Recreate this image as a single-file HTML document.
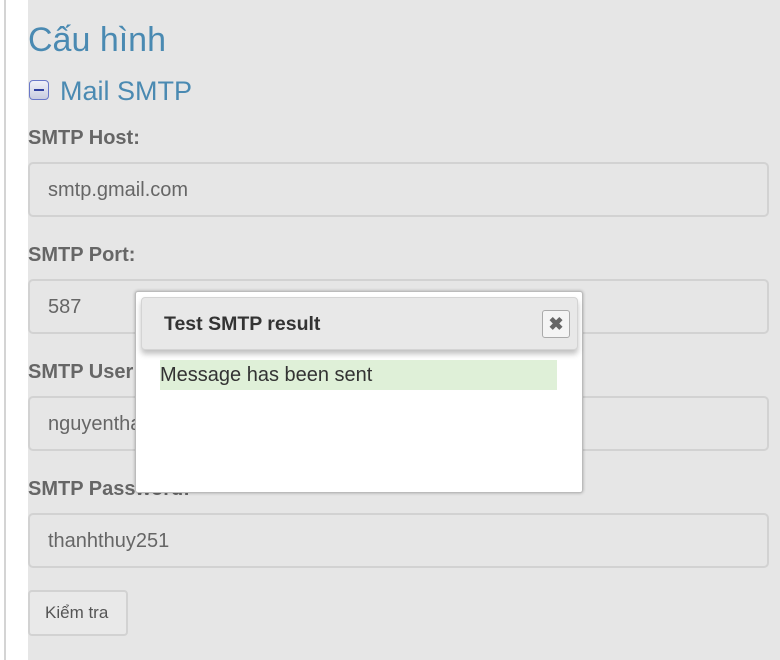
<!DOCTYPE html>
<html><head><meta charset="utf-8"><style>
body{margin:0;width:780px;height:660px;background:#fff;font-family:"Liberation Sans",sans-serif;position:relative;overflow:hidden}
.vl{position:absolute;left:4px;top:0;width:2px;height:660px;background:#d4d4d4}
.main{position:absolute;left:28px;top:0;width:752px;height:660px;background:#e6e6e6}
h1{position:absolute;left:28px;top:21px;margin:0;font-weight:normal;font-size:34px;color:#4a8ab2}
h2{position:absolute;left:60px;top:76px;margin:0;font-weight:normal;font-size:27px;color:#4a8ab2}
.ic{position:absolute;left:29px;top:80px;width:20px;height:20px;border:1px solid #6a78c8;border-radius:4px;background:linear-gradient(#f0f0f8,#c8cce0);box-sizing:border-box}
.ic:after{content:"";position:absolute;left:4px;top:8px;width:10px;height:2px;background:#3040a0}
.lb{position:absolute;left:28px;font-weight:bold;font-size:20px;color:#666}
.in{position:absolute;left:28px;width:741px;height:55px;box-sizing:border-box;border:2px solid #d2d2d2;border-radius:5px;font-size:20px;color:#666;padding:15px 0 0 18px}
.btn{position:absolute;left:28px;top:590px;width:100px;height:46px;box-sizing:border-box;border:2px solid #d2d2d2;border-radius:4px;font-size:17px;color:#555;padding:11px 0 0 15px;background:#e9e9e9}
.dlg{position:absolute;left:135px;top:291px;width:448px;height:202px;box-sizing:border-box;background:#fff;border:1px solid #bbb;border-radius:3px;box-shadow:0 0 3px rgba(0,0,0,.3)}
.hd{position:absolute;left:5px;top:5px;width:437px;height:53px;box-sizing:border-box;background:#e8e8e8;border:1px solid #d4d4d4;border-radius:4px;box-shadow:0 4px 6px rgba(0,0,0,.25);font-weight:bold;font-size:19.5px;color:#333;padding:15px 0 0 22px}
.x{position:absolute;left:400px;top:12px;width:28px;height:28px;box-sizing:border-box;border:1px solid #aaa;border-radius:3px;background:#f4f4f4;color:#666;font-size:18px;text-align:center;line-height:26px;font-weight:bold}
.ok{position:absolute;left:24px;top:68px;width:397px;height:30px;background:#dff0d8;font-size:20px;color:#333;line-height:30px}
</style></head><body>
<div class="vl"></div><div class="main"></div>
<h1>Cấu hình</h1>
<div class="ic"></div><h2>Mail SMTP</h2>
<div class="lb" style="top:127px">SMTP Host:</div>
<div class="in" style="top:162px">smtp.gmail.com</div>
<div class="lb" style="top:244px">SMTP Port:</div>
<div class="in" style="top:279px">587</div>
<div class="lb" style="top:361px">SMTP User:</div>
<div class="in" style="top:396px">nguyenthanhthuy</div>
<div class="lb" style="top:478px">SMTP Password:</div>
<div class="in" style="top:513px">thanhthuy251</div>
<div class="btn">Kiểm tra</div>
<div class="dlg">
<div class="hd">Test SMTP result<div class="x">✖</div></div>
<div class="ok">Message has been sent</div>
</div>
</body></html>
